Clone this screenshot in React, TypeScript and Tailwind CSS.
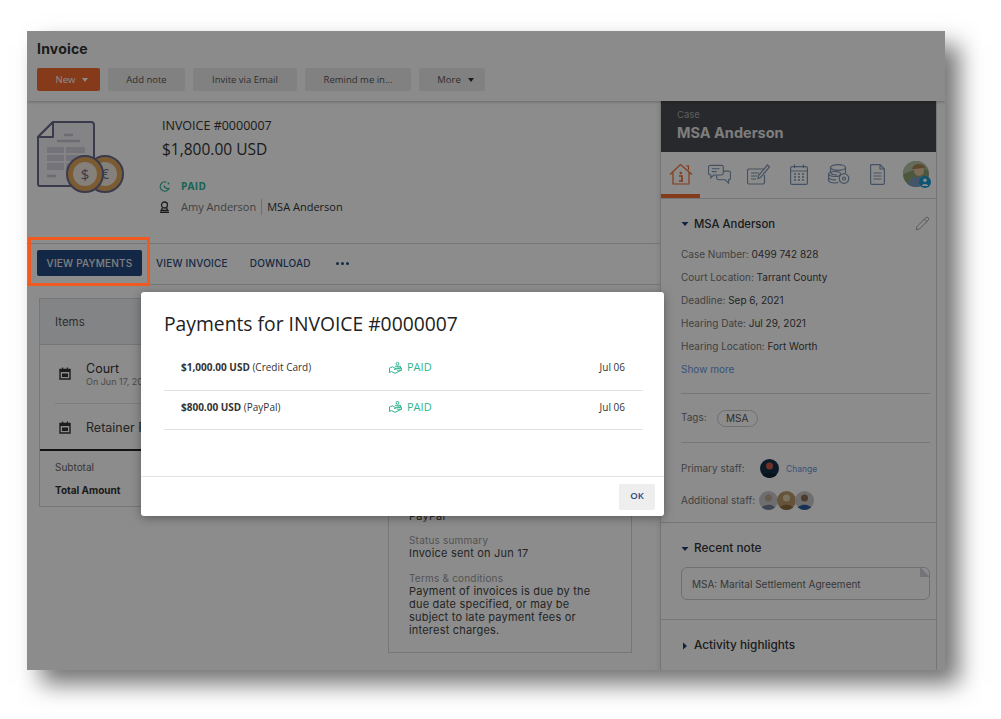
import { Pencil } from 'lucide-react';

const Caret = ({ open = true }: { open?: boolean }) => (
  <svg width="8" height="8" viewBox="0 0 8 8" className="shrink-0">
    {open ? <path d="M0.5 2 H7.5 L4 6 Z" fill="#1f3f6e" /> : <path d="M2 0.5 V7.5 L6 4 Z" fill="#1f3f6e" />}
  </svg>
);

const InvoiceArt = () => (
  <svg width="90" height="82" viewBox="0 0 90 82" fill="none">
    <path d="M16 2 H54 a3 3 0 0 1 3 3 V66 H3 a2 2 0 0 1 -2 -2 V17 Z" fill="#f1f0f4" stroke="#6b6a8c" strokeWidth="2" />
    <path d="M16 2 V17 H1 Z" fill="#fff" stroke="#6b6a8c" strokeWidth="2" strokeLinejoin="round" />
    <path d="M27 15 H36 M20 21 H43" stroke="#c4c3d0" strokeWidth="2.500" />
    <path d="M10 27 H48 V50 H10 Z" fill="#d2d1dc" />
    <path d="M10 34 H48 M10 42 H48 M28 27 V50" stroke="#f1f0f4" strokeWidth="2" />
    <path d="M10 56 H19" stroke="#c4c3d0" strokeWidth="2.500" />
    <circle cx="68" cy="54" r="18" fill="#e0a75c" stroke="#6b6a8c" strokeWidth="2" />
    <circle cx="68" cy="54" r="12" fill="#f2e9dd" />
    <text x="68" y="59" textAnchor="middle" fontSize="14" fill="#6b6a8c" fontFamily="Open Sans, sans-serif">€</text>
    <circle cx="48" cy="54" r="18" fill="#e0a75c" stroke="#6b6a8c" strokeWidth="2" />
    <circle cx="48" cy="54" r="12" fill="#f2e9dd" />
    <text x="48" y="60" textAnchor="middle" fontSize="15" fill="#6b6a8c" fontFamily="Open Sans, sans-serif">$</text>
  </svg>
);

const CalIcon = () => (
  <svg width="12" height="13" viewBox="0 0 12 13" className="shrink-0">
    <path d="M1 2.500 H11 V12 H1 Z" fill="none" stroke="#333" strokeWidth="1.400" />
    <path d="M1 2.500 H11 V5 H1 Z M3 0.500 H4.200 V3 H3 Z M7.800 0.500 H9 V3 H7.800 Z M3 6.500 H9 V10 H3 Z" fill="#333" />
  </svg>
);

const PaidHand = () => (
  <svg width="13" height="12" viewBox="0 0 13 12" fill="none" stroke="#2fb391" strokeWidth="1" className="shrink-0">
    <circle cx="8.500" cy="1.800" r="1.400" />
    <path d="M6 4.300 H11.500 V6.200 H7.500 M7.500 6.200 H12.500 V8.200 H8" />
    <path d="M0.500 6 L3.500 4.800 L7.500 7 L5 7.500 M0.500 10.500 L2.500 9.500 L6 11.300 L12.500 8.200" />
    <path d="M0.500 6 V10.500" />
  </svg>
);

const tabStroke = '#7d95b3';

const TabIcons = () => (
  <>
    <div className="w-[39px] h-[42px] flex items-center justify-center">
      <svg width="24" height="22" viewBox="0 0 24 22" fill="none" stroke="#f26a2e" strokeWidth="1.200">
        <path d="M1 11.500 L11.500 1.500 L23 11.500 M4 9.500 V21 H20 V9.500 M17 3 H19.500 V7" />
        <circle cx="11.800" cy="10" r="1.300" fill="#f26a2e" stroke="none" />
        <path d="M10 13 H13 V18 H14 M10 18 H14" strokeWidth="1.600" />
      </svg>
    </div>
    <div className="w-[39px] h-[42px] flex items-center justify-center">
      <svg width="23" height="21" viewBox="0 0 24 21" fill="none" stroke={tabStroke} strokeWidth="1.200">
        <path d="M2.500 1 H14 a2 2 0 0 1 2 2 V9 a2 2 0 0 1 -2 2 H6 L3 14 V11 H2.500 a2 2 0 0 1 -2 -2 V3 a2 2 0 0 1 2 -2 Z" />
        <path d="M4 4.500 H12 M4 7.500 H9" />
        <path d="M16 7 H21.500 a2 2 0 0 1 2 2 V14 a2 2 0 0 1 -2 2 V19.500 L18 16 H11 a2 2 0 0 1 -2 -2 V11" />
      </svg>
    </div>
    <div className="w-[39px] h-[42px] flex items-center justify-center">
      <svg width="23" height="21" viewBox="0 0 23 21" fill="none" stroke={tabStroke} strokeWidth="1.200">
        <path d="M17 5 H2 a1.500 1.500 0 0 0 -1.500 1.500 V18.500 A1.500 1.500 0 0 0 2 20 H16 a1.500 1.500 0 0 0 1.500 -1.500 V11" />
        <path d="M4 9 H12 M4 12 H10 M4 15 H9" />
        <path d="M11 14.500 L11.500 11.500 L20.500 1 L22.500 3 L13.500 13.500 Z" />
      </svg>
    </div>
    <div className="w-[41px] h-[42px] flex items-center justify-center">
      <svg width="18" height="21" viewBox="0 0 18 21" fill="none" stroke={tabStroke} strokeWidth="1.200">
        <rect x="0.600" y="2.600" width="16.800" height="17.800" rx="1.500" />
        <path d="M0.600 7 H17.400 M4.500 0.500 V4 M13.500 0.500 V4" />
        <path d="M4 10 H6 M8 10 H10 M12 10 H14 M4 13 H6 M8 13 H10 M12 13 H14 M4 16 H6 M8 16 H10 M12 16 H14" strokeWidth="1.700" />
      </svg>
    </div>
    <div className="w-[39px] h-[42px] flex items-center justify-center">
      <svg width="22" height="20" viewBox="0 0 22 20" fill="none" stroke={tabStroke} strokeWidth="1.200">
        <ellipse cx="10" cy="3.500" rx="7.500" ry="2.800" />
        <path d="M2.500 3.500 V8 C2.500 10 6 11 9 11 M17.500 3.500 V9" />
        <ellipse cx="6.500" cy="10" rx="6" ry="2.500" />
        <path d="M0.500 10 V16 C0.500 18 4 19 6.500 19 C8 19 9.500 18.800 10.500 18.300 M0.500 13 C0.500 15 4 16 8 15.800" />
        <circle cx="16" cy="14.500" r="4.800" />
        <circle cx="16" cy="14.500" r="1.500" />
      </svg>
    </div>
    <div className="w-[39px] h-[42px] flex items-center justify-center">
      <svg width="15" height="21" viewBox="0 0 15 21" fill="none" stroke={tabStroke} strokeWidth="1.200">
        <path d="M1 0.600 H10 L14.400 5 V19 a1.400 1.400 0 0 1 -1.400 1.400 H2 A1.400 1.400 0 0 1 0.600 19 V1 Z M10 0.600 V5 H14.400" />
        <path d="M3.500 9 H11.500 M3.500 12 H11.500 M3.500 15 H11.500" />
      </svg>
    </div>
    <div className="relative ml-[6px] w-[26px] h-[26px]">
      <svg width="26" height="26" viewBox="0 0 26 26" className="rounded-full">
        <rect width="26" height="26" fill="#8aa070" />
        <path d="M0 0 H26 V9 C16 6 8 10 0 13 Z" fill="#b9c4a8" />
        <circle cx="16" cy="10" r="5" fill="#e3c3a0" />
        <path d="M9 8 C10 2 21 1 23 8 L20 7 L12 8 Z" fill="#a88452" />
        <path d="M4 26 C5 17 13 14 18 16 L24 26 Z" fill="#7c9cc0" />
      </svg>
      <div className="absolute -right-[2px] -bottom-[1px] w-[12px] h-[12px] rounded-full bg-[#1b9ad6] flex items-center justify-center">
        <svg width="8" height="8" viewBox="0 0 8 8" fill="#fff">
          <circle cx="4" cy="2.300" r="1.800" />
          <path d="M0.800 8 C0.800 5.200 7.200 5.200 7.200 8 Z" />
        </svg>
      </div>
    </div>
  </>
);

const InfoRow = ({ label, value }: { label: string; value: string }) => (
  <div className="h-[23px] flex items-center text-[10px] text-[#777]">
    {label}&nbsp;<span className="text-[#444]">{value}</span>
  </div>
);

const Avatar = ({ a, b, c }: { a: string; b: string; c: string }) => (
  <svg width="19" height="19" viewBox="0 0 19 19" className="rounded-full -mr-px shrink-0">
    <rect width="19" height="19" fill={a} />
    <circle cx="9.500" cy="7" r="3.500" fill={b} />
    <path d="M2 19 C3 12 16 12 17 19 Z" fill={c} />
  </svg>
);

const PaymentRow = ({ amount, method, pb }: { amount: string; method: string; pb: string }) => (
  <div className={`h-[40px] -mt-px flex items-center border-b border-[#e2e2e2] pl-[17px] pr-[18px] text-[10px] text-[#333] ${pb}`}>
    <div className="w-[208px]">
      <span className="font-bold">{amount}</span> ({method})
    </div>
    <PaidHand />
    <span className="ml-[5px] text-[11px] text-[#2fb391]">PAID</span>
    <span className="ml-auto">Jul 06</span>
  </div>
);

export default function App() {
  return (
    <div className="w-[1001px] h-[719px] bg-white pt-[31px] pl-[27px] overflow-hidden">
      <div className="relative w-[918px] h-[639px] bg-white shadow-[14px_14px_22px_rgba(0,0,0,0.55)] overflow-hidden font-['Inter',sans-serif]">
        {/* page header */}
        <div className="relative h-[70px] pl-[10px] pt-[9px] bg-[#fdfdfd] shadow-[0_1px_3px_rgba(0,0,0,0.25)]">
          <h1 className="text-[14px] leading-[18px] font-bold tracking-[0.2px] text-[#333]">Invoice</h1>
          <div className="flex gap-[8px] mt-[10px] text-[9.500px] text-[#555] font-['Open_Sans',sans-serif]">
            <button className="w-[63px] h-[23px] pt-px rounded-[2px] bg-[#f26a2e] text-white flex items-center justify-center gap-[7px] pl-[7px]">
              New
              <span className="w-0 h-0 border-x-[3.500px] border-x-transparent border-t-[4px] border-t-white" />
            </button>
            <button className="w-[77px] h-[23px] pt-px rounded-[2px] bg-[#ececec]">Add note</button>
            <button className="w-[104px] h-[23px] pt-px rounded-[2px] bg-[#ececec]">Invite via Email</button>
            <button className="w-[106px] h-[23px] pt-px rounded-[2px] bg-[#ececec]">Remind me in...</button>
            <button className="w-[66px] h-[23px] pt-px rounded-[2px] bg-[#ececec] flex items-center justify-center gap-[7px] pl-[7px]">
              More
              <span className="w-0 h-0 border-x-[3.500px] border-x-transparent border-t-[4px] border-t-[#333]" />
            </button>
          </div>
        </div>

        <div className="flex h-[569px]">
          {/* main column */}
          <div className="w-[633px] shrink-0">
            <div className="h-[143px] flex pl-[10px] pt-[19px] border-b border-[#d8d8d8]">
              <InvoiceArt />
              <div className="ml-[35px] font-['Open_Sans',sans-serif]">
                <div className="text-[12.500px] leading-[16px] text-[#333] -mt-[2px]">INVOICE #0000007</div>
                <div className="mt-[5px] text-[15.500px] leading-[20px] font-medium text-[#333]">$1,800.00 USD</div>
                <div className="mt-[20px] flex items-center h-[14px] text-[10px] font-bold tracking-[0.3px] text-[#2fb391]">
                  <svg width="11" height="11" viewBox="0 0 11 11" fill="none" stroke="#2fb391" strokeWidth="1.200" className="-ml-[3px] mr-[11px]">
                    <path d="M7.500 1.200 A4.600 4.600 0 1 0 10 7.500 A4 4 0 0 1 5 4.500" />
                    <circle cx="9.500" cy="2.500" r="0.900" fill="#2fb391" stroke="none" />
                  </svg>
                  PAID
                </div>
                <div className="mt-[7px] flex items-center h-[14px] text-[11px] text-[#333]">
                  <svg width="11" height="12" viewBox="0 0 11 12" fill="none" stroke="#333" strokeWidth="1.300" className="-ml-[3px] mr-[11px]">
                    <circle cx="5.500" cy="4" r="3" />
                    <path d="M3.500 7 L2 9.500 H9 L7.500 7 M1 11.300 H10" />
                  </svg>
                  <span className="text-[#777] pr-[5px] border-r border-[#ccc]">Amy Anderson</span>
                  <span className="pl-[5px]">MSA Anderson</span>
                </div>
              </div>
            </div>
            <div className="h-[41px] flex items-center pl-[10px] pb-[2px] border-b border-[#d8d8d8] text-[10px] font-medium tracking-[0.2px] text-[#2a4d80]">
              <button className="w-[105px] h-[26px] rounded-[2px] bg-[#234a80] text-[#e8e8e8]">VIEW PAYMENTS</button>
              <span className="ml-[14px]">VIEW INVOICE</span>
              <span className="ml-[22px]">DOWNLOAD</span>
              <span className="ml-[25px] flex gap-[2px]">
                <i className="w-[3px] h-[3px] rounded-full bg-[#2a4d80]" />
                <i className="w-[3px] h-[3px] rounded-full bg-[#2a4d80]" />
                <i className="w-[3px] h-[3px] rounded-full bg-[#2a4d80]" />
              </span>
            </div>
            <div className="flex pl-[12px] pt-[13px] gap-[8px] items-start">
              <div className="w-[341px] h-[209px] border border-[#d8d8d8]">
                <div className="h-[46px] flex items-center pl-[15px] pt-[3px] bg-[#eef0f4] border-b border-[#d8d8d8] text-[11.500px] text-[#555]">Items</div>
                <div className="ml-[15px] h-[59px] flex items-center gap-[15px] border-b border-[#e4e4e4]">
                  <span className="ml-[4px] -mt-px"><CalIcon /></span>
                  <div>
                    <div className="text-[12.500px] leading-[15px] text-[#333]">Court</div>
                    <div className="text-[9px] leading-[12px] text-[#888]">On Jun 17, 2021</div>
                  </div>
                </div>
                <div className="ml-[15px] h-[45px] flex items-center gap-[15px] pt-[3px]">
                  <span className="ml-[4px] -mt-px"><CalIcon /></span>
                  <span className="text-[12.500px] text-[#444]">Retainer Fee</span>
                </div>
                <div className="border-t-2 border-[#222] px-[15px] pt-[5px] text-[10px]">
                  <div className="h-[23px] flex items-center text-[#666]">Subtotal</div>
                  <div className="h-[23px] flex items-center font-bold text-[#333]">Total Amount</div>
                </div>
              </div>
              <div className="w-[244px] h-[355px] border border-[#d8d8d8] flex flex-col justify-end pl-[20px] pr-[32px] pb-[15px] text-[11px] leading-[13px] tracking-[0.2px] text-[#444]">
                <div className="text-[10px] text-[#999]">Payment method</div>
                <div>PayPal</div>
                <div className="mt-[11px] text-[10px] text-[#999]">Status summary</div>
                <div>Invoice sent on Jun 17</div>
                <div className="mt-[12px] text-[10px] text-[#999]">Terms &amp; conditions</div>
                <div>Payment of invoices is due by the due date specified, or may be subject to late payment fees or interest charges.</div>
              </div>
            </div>
          </div>

          {/* case sidebar */}
          <aside className="w-[277px] shrink-0 border-x border-[#d8d8d8] shadow-[-2px_0_4px_rgba(0,0,0,0.08)]">
            <div className="h-[51px] bg-[#4a4c50] pl-[16px] pt-[8px]">
              <div className="text-[9.500px] leading-[12px] text-[#aaa]">Case</div>
              <div className="mt-[2px] text-[14.500px] leading-[20px] font-bold text-[#e4e4e4]">MSA Anderson</div>
            </div>
            <div className="relative h-[47px] flex items-center border-b border-[#d8d8d8] pb-[2px]">
              <TabIcons />
              <div className="absolute left-0 bottom-0 w-[39px] h-[4px] bg-[#f26a2e]" />
            </div>
            <div className="pl-[20px] pr-[6px]">
              <div className="h-[44px] flex items-center gap-[5px] pt-[6px]">
                <Caret />
                <span className="text-[11.300px] font-medium text-[#333]">MSA Anderson</span>
                <Pencil className="ml-auto -mt-[1px] w-[15px] h-[15px] text-[#888]" strokeWidth={1.200} />
              </div>
              <div>
                <InfoRow label="Case Number:" value="0499 742 828" />
                <InfoRow label="Court Location:" value="Tarrant County" />
                <InfoRow label="Deadline:" value="Sep 6, 2021" />
                <InfoRow label="Hearing Date:" value="Jul 29, 2021" />
                <InfoRow label="Hearing Location:" value="Fort Worth" />
                <div className="h-[23px] flex items-center text-[10px] text-[#6a96de]">Show more</div>
              </div>
              <div className="mt-[12px] h-[50px] border-y border-[#d8d8d8] flex items-center gap-[10px] text-[10px] text-[#777]">
                <span className="-mt-[2px]">Tags:</span>
                <span className="h-[17px] w-[41px] rounded-full border border-[#ccc] flex items-center justify-center text-[#555]">MSA</span>
              </div>
              <div className="mt-[12px] flex items-center h-[26px] text-[10px] text-[#777]">
                <span className="w-[79px]">Primary staff:</span>
                <Avatar a="#17314a" b="#c75a4a" c="#102436" />
                <span className="ml-[8px] mt-[3px] text-[8.500px] text-[#6a96de]">Change</span>
              </div>
              <div className="mt-[6px] flex items-center h-[26px] text-[10px] text-[#777]">
                <span className="w-[78px]">Additional staff:</span>
                <Avatar a="#c9c9c9" b="#b8a890" c="#6f7f99" />
                <Avatar a="#b89a6a" b="#e0d0b0" c="#8a6a40" />
                <Avatar a="#c8c8c8" b="#8a6a50" c="#2a5a9a" />
              </div>
            </div>
            <div className="mt-[9px] border-t border-[#d8d8d8] h-[97px] pl-[20px] pr-[6px]">
              <div className="h-[44px] flex items-center gap-[5px] pt-[7px]">
                <Caret />
                <span className="text-[11.800px] font-medium text-[#333]">Recent note</span>
              </div>
              <div className="relative h-[33px] rounded-[6px] border border-[#ccc] flex items-center pl-[10px] pt-[2px] text-[10px] text-[#666]">
                MSA: Marital Settlement Agreement
                <svg width="10" height="10" viewBox="0 0 10 10" className="absolute -right-px -top-px">
                  <path d="M0 0 L10 10 H0 Z" fill="#d0d4de" />
                </svg>
              </div>
            </div>
            <div className="border-t border-[#d8d8d8] h-[50px] pl-[20px] pr-[6px] flex items-center gap-[5px] pt-[2px]">
              <Caret open={false} />
              <span className="text-[11.800px] font-medium text-[#333]">Activity highlights</span>
            </div>
          </aside>
        </div>

        {/* dim layer, then modal + annotation on top */}
        <div className="absolute inset-0 bg-black/45" />
        <div className="absolute left-[1px] top-[206px] w-[122px] h-[49px] border-[3px] border-[#f0591f]" />
        <div className="absolute left-[114px] top-[261px] w-[523px] h-[224px] rounded-[3px] bg-white shadow-[0_2px_10px_rgba(0,0,0,0.35)] flex flex-col font-['Open_Sans',sans-serif]">
          <div className="h-[184px] pl-[23px] pr-[21px] pt-[18px]">
            <h2 className="text-[19.300px] leading-[27px] text-[#222]">Payments for INVOICE #0000007</h2>
            <div className="mt-[15px]">
              <PaymentRow amount="$1,000.00 USD" method="Credit Card" pb="pb-[6px]" />
              <PaymentRow amount="$800.00 USD" method="PayPal" pb="pb-[5px]" />
            </div>
          </div>
          <div className="flex-1 border-t border-[#e2e2e2] flex items-center justify-end pr-[9px]">
            <button className="w-[36px] h-[26px] rounded-[2px] bg-[#eeeeee] text-[9.500px] font-semibold text-[#234a80]">OK</button>
          </div>
        </div>
      </div>
    </div>
  );
}
